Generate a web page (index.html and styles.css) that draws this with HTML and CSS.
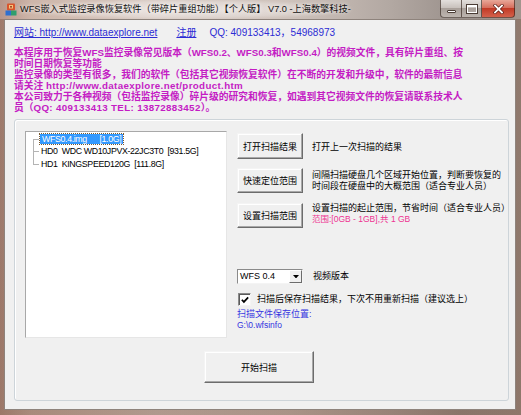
FILE: index.html
```html
<!DOCTYPE html>
<html lang="zh-CN">
<head>
<meta charset="utf-8">
<title>WFS</title>
<link rel="stylesheet" href="styles.css">
</head>
<body>
<div class="window">
  <div class="titlebar">
    <svg class="app-icon" viewBox="0 0 12 13" aria-hidden="true">
      <rect x="2" y="0.5" width="8" height="7" rx="1" fill="#d9542c"/>
      <rect x="4" y="2" width="4" height="3.5" fill="#f6c27a"/>
      <rect x="5.2" y="3" width="1.6" height="1.6" fill="#8a3018"/>
      <rect x="0.5" y="7.5" width="5.5" height="5" fill="#2f6fd0"/>
      <rect x="6" y="7.5" width="5.5" height="5" fill="#2f9e6e"/>
    </svg>
    <span class="title">WFS嵌入式监控录像恢复软件（带碎片重组功能）【个人版】 V7.0 -上海数擎科技-</span>
    <div class="caption">
      <div class="cbtn cmin"><span class="min-glyph"></span></div>
      <div class="cbtn cmax"><span class="max-glyph"></span></div>
      <div class="cbtn cclose">
        <svg class="close-glyph" viewBox="0 0 11 10" aria-hidden="true">
          <path d="M2 1.5 L9 8.5 M9 1.5 L2 8.5" stroke="#5a1a12" stroke-width="3.2" stroke-linecap="square"/>
          <path d="M2 1.5 L9 8.5 M9 1.5 L2 8.5" stroke="#ffffff" stroke-width="1.8" stroke-linecap="square"/>
        </svg>
      </div>
    </div>
  </div>

  <div class="client">
    <div class="links">
      <a class="link site">网站: http://www.dataexplore.net</a>
      <a class="link reg">注册</a>
      <span class="qq">QQ: 409133413，54968973</span>
    </div>

    <div class="intro">
      <div>本程序用于恢复WFS监控录像常见版本（WFS0.2、WFS0.3和WFS0.4）的视频文件，具有碎片重组、按</div>
      <div>时间日期恢复等功能</div>
      <div>监控录像的类型有很多，我们的软件（包括其它视频恢复软件）在不断的开发和升级中，软件的最新信息</div>
      <div>请关注 <span class="wide">http://www.dataexplore.net/product.htm</span></div>
      <div>本公司致力于各种视频（包括监控录像）碎片级的研究和恢复，如遇到其它视频文件的恢复请联系技术人</div>
      <div>员（<span class="wide">QQ: 409133413 TEL: 13872883452</span>）。</div>
    </div>

    <div class="group">
      <div class="main">
        <div class="tree">
          <ul class="tree-list">
            <li><span class="sel">WFS0.4.img      [1.0G]</span></li>
            <li><span class="item">HD0  WDC WD10JPVX-22JC3T0  [931.5G]</span></li>
            <li><span class="item">HD1  KINGSPEED120G  [111.8G]</span></li>
          </ul>
        </div>

        <div class="side">
          <div class="row row1">
            <button class="btn b26">打开扫描结果</button>
            <div class="label">打开上一次扫描的结果</div>
          </div>
          <div class="row row2">
            <button class="btn b25">快速定位范围</button>
            <div class="label">间隔扫描硬盘几个区域开始位置，判断要恢复的<br>时间段在硬盘中的大概范围（适合专业人员）</div>
          </div>
          <div class="row row3">
            <button class="btn b25">设置扫描范围</button>
            <div class="label">设置扫描的起止范围，节省时间（适合专业人员）<br><span class="range">范围:[0GB - 1GB],共 1 GB</span></div>
          </div>
          <div class="row combo-row">
            <div class="combo">
              <span class="combo-text">WFS 0.4</span>
              <span class="combo-btn"><svg viewBox="0 0 7 4" class="tri" aria-hidden="true"><path d="M0 0 H7 L3.5 4 Z" fill="#000"/></svg></span>
            </div>
            <div class="label">视频版本</div>
          </div>
          <div class="row check-row">
            <span class="checkbox">
              <svg viewBox="0 0 11 11" aria-hidden="true"><path d="M2 5.2 L4.3 7.6 L9 2.6" fill="none" stroke="#000" stroke-width="1.9"/></svg>
            </span>
            <div class="label">扫描后保存扫描结果，下次不用重新扫描（建议选上）</div>
          </div>
          <div class="save">
            <div>扫描文件保存位置:</div>
            <div class="path">G:\0.wfsinfo</div>
          </div>
        </div>
      </div>
      <div class="start-row">
        <button class="btn start">开始扫描</button>
      </div>
    </div>
  </div>
</div>
</body>
</html>
```

FILE: styles.css
```css
* { box-sizing: border-box; }
html, body { margin: 0; padding: 0; }
body {
  width: 521px;
  height: 415px;
  overflow: hidden;
  font-family: "Liberation Sans", "Noto Sans CJK SC", sans-serif;
  color: #000;
}

.window {
  width: 521px;
  height: 415px;
  display: flex;
  flex-direction: column;
  background:
    linear-gradient(180deg, rgba(0,0,0,0) 0, rgba(0,0,0,0) 19px, rgba(110,70,50,0.34) 19px, rgba(110,70,50,0.38) 100%),
    linear-gradient(90deg, #b8968a 0%, #cdb5a9 6%, #d9ccc5 30%, #cfc3bc 55%, #b2a8a2 75%, #9b918c 88%, #a2958d 100%);
}

/* ---------- title bar ---------- */
.titlebar {
  height: 19px;
  flex: none;
  display: flex;
  align-items: flex-start;
  padding-left: 5px;
}
.app-icon { width: 12px; height: 13px; margin-top: 3px; flex: none; }
.title {
  margin-left: 3px;
  font-size: 9.2px;
  line-height: 19px;
  white-space: nowrap;
  color: #111;
  background: radial-gradient(ellipse at center, rgba(255,255,255,0.55) 0%, rgba(255,255,255,0.25) 55%, rgba(255,255,255,0) 75%);
  text-shadow: 0 0 4px rgba(255,255,255,0.9);
}
.caption {
  margin-left: auto;
  margin-right: 6px;
  display: flex;
  height: 18px;
}
.cbtn {
  height: 18px;
  display: flex;
  align-items: center;
  justify-content: center;
  border: 1px solid rgba(50,36,28,0.65);
  border-top: none;
}
.cmin {
  width: 21px;
  border-right: none;
  border-bottom-left-radius: 4px;
  background: linear-gradient(180deg, #e3dfdc 0%, #c9c2bd 45%, #a9a09a 50%, #bdb5af 100%);
}
.cmax {
  width: 21px;
  background: linear-gradient(180deg, #e3dfdc 0%, #c9c2bd 45%, #a9a09a 50%, #bdb5af 100%);
}
.cclose {
  width: 33px;
  border-left: none;
  border-bottom-right-radius: 4px;
  background: linear-gradient(180deg, #e8a798 0%, #d66f5e 45%, #c23a26 50%, #d4614b 100%);
}
.min-glyph {
  width: 9px;
  height: 3px;
  margin-top: 6px;
  background: #fff;
  border: 1px solid #4a3c34;
  border-radius: 1px;
}
.max-glyph {
  width: 10px;
  height: 8px;
  border: 1px solid #fff;
  border-top-width: 2px;
  outline: 1px solid #4a3c34;
}
.close-glyph { width: 11px; height: 10px; }

/* ---------- client area ---------- */
.client {
  margin: 0 5px 0 4px;
  height: 391px;
  flex: none;
  border: 1px solid #8e837c;
  background: #f0f0f0;
  padding: 6px 6px 0 9px;
}
.links {
  display: flex;
  height: 13px;
  font-size: 10px;
  line-height: 13px;
  white-space: nowrap;
  color: #2c2cd4;
}
.link { color: #2c2cd4; text-decoration: underline; }
.reg { margin-left: 19px; }
.qq { margin-left: 13px; }

.intro {
  margin-top: 8px;
  font-size: 9.75px;
  font-weight: bold;
  line-height: 11px;
  color: #c41cc4;
  white-space: nowrap;
}
.wide { letter-spacing: 0.35px; }

/* ---------- group box ---------- */
.group {
  margin-top: 6px;
  width: 495px;
  height: 282px;
  border: 1px solid #cdd4d9;
  border-radius: 3px;
  box-shadow: inset 1px 1px 0 #ffffff;
  padding: 11px 0 0 10px;
}
.main {
  display: flex;
  gap: 10px;
  height: 207px;
}
.tree {
  width: 202px;
  height: 207px;
  flex: none;
  background: #fff;
  border: 1px solid;
  border-color: #a8a8a8 #e6e6e6 #e6e6e6 #a8a8a8;
}
.tree-list {
  list-style: none;
  margin: 0;
  padding: 1px 0 0 14px;
  font-size: 8.8px;
  letter-spacing: -0.35px;
}
.tree-list li {
  position: relative;
  height: 12.4px;
  line-height: 12px;
  white-space: pre;
}
.tree-list li::before {
  content: "";
  position: absolute;
  left: -7px;
  top: 6px;
  width: 6px;
  border-top: 1px solid #b4b4b4;
}
.tree-list li::after {
  content: "";
  position: absolute;
  left: -7px;
  top: 0;
  bottom: 0;
  border-left: 1px solid #b4b4b4;
}
.tree-list li:first-child::after { top: 6px; }
.tree-list li:last-child::after { bottom: auto; height: 6px; }
.sel {
  display: inline-block;
  background: #3399ff;
  color: #fff;
  line-height: 10px;
  padding: 0 2px;
  margin-top: 1px;
  outline: 1px dotted #7a5a30;
}
.item { padding-left: 1px; }

.side {
  display: flex;
  flex-direction: column;
  width: 271px;
}
.row { display: flex; gap: 9px; }
.row1 { margin-top: 2px; align-items: center; }
.row1 .label { margin-top: 3px; }
.row2 { margin-top: 9px; align-items: center; }
.row3 { margin-top: 10px; align-items: flex-start; }
.combo-row { margin-top: 41px; align-items: center; gap: 10px; }
.check-row { margin-top: 9px; align-items: center; gap: 6px; }

.btn {
  width: 66px;
  flex: none;
  padding: 0;
  font-family: "Liberation Sans", "Noto Sans CJK SC", sans-serif;
  font-size: 9px;
  color: #000;
  background: #f0f0f0;
  border: 1px solid;
  border-color: #f4f4f4 #6c6c6c #6c6c6c #f4f4f4;
  box-shadow: inset -1px -1px 0 #a8a8a8, inset 1px 1px 0 #ffffff;
}
.b26 { height: 26px; }
.b25 { height: 25px; }
.label {
  font-size: 9px;
  line-height: 11px;
  white-space: nowrap;
}
.range {
  color: #ee3392;
  font-size: 8.5px;
}

.combo {
  width: 66px;
  height: 15px;
  flex: none;
  display: flex;
  background: #fff;
  border: 1px solid;
  border-color: #8a8a8a #f4f4f4 #f4f4f4 #8a8a8a;
}
.combo-text {
  flex: 1;
  font-size: 9px;
  line-height: 13px;
  padding-left: 2px;
}
.combo-btn {
  width: 13px;
  height: 13px;
  display: flex;
  align-items: center;
  justify-content: center;
  background: #f0f0f0;
  border: 1px solid;
  border-color: #ffffff #6c6c6c #6c6c6c #ffffff;
}
.tri { width: 6px; height: 3.5px; }

.checkbox {
  width: 13px;
  height: 13px;
  flex: none;
  margin-left: 1px;
  display: flex;
  align-items: center;
  justify-content: center;
  background: #fff;
  border: 1px solid;
  border-color: #8a8a8a #f4f4f4 #f4f4f4 #8a8a8a;
  box-shadow: inset 1px 1px 0 #5a5a5a;
}
.checkbox svg { width: 10px; height: 10px; }

.save {
  margin-top: 3px;
  font-size: 9px;
  line-height: 11px;
  color: #3535e0;
  white-space: nowrap;
}
.path { font-size: 8.5px; }

.start-row { margin-top: 13px; }
.start {
  width: 110px;
  height: 32px;
  margin-left: 179px;
}
```
